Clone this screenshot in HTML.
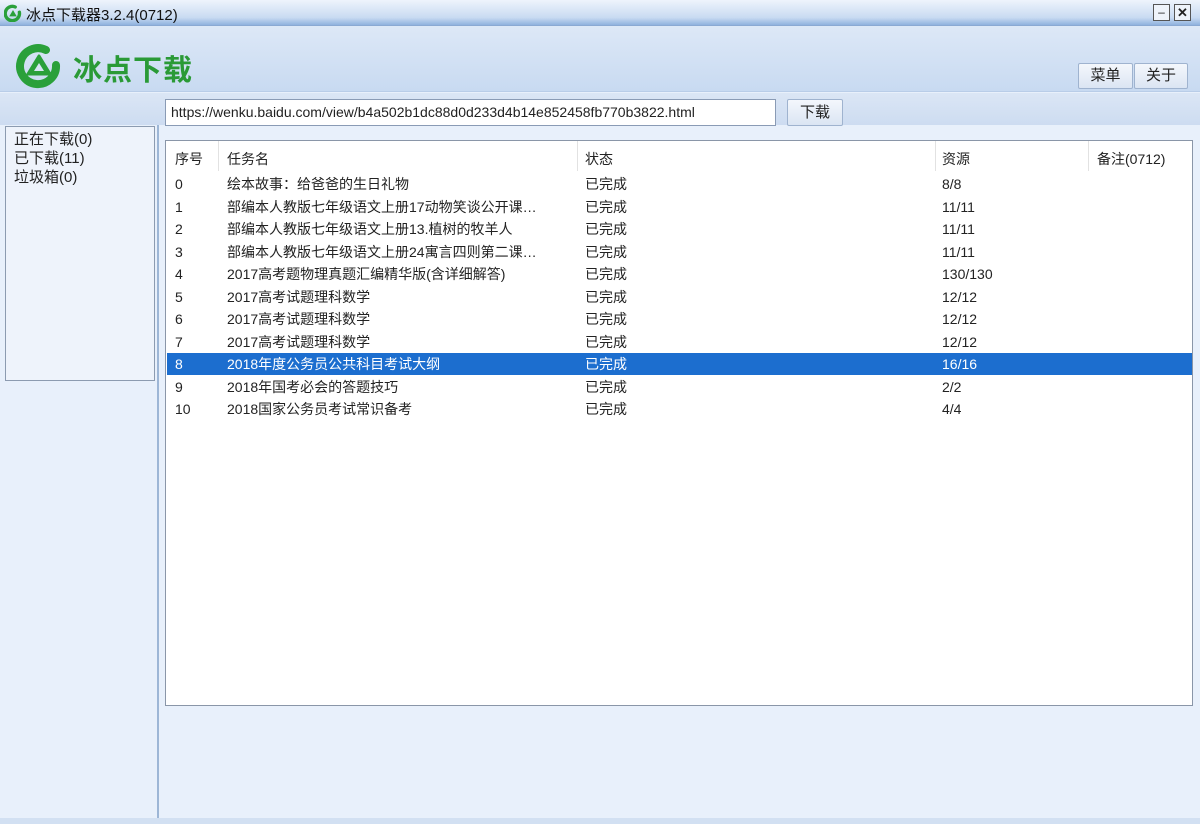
<!DOCTYPE html>
<html><head><meta charset="utf-8"><style>
*{margin:0;padding:0;box-sizing:border-box}
body{width:1200px;height:824px;overflow:hidden;background:#e8f0fb;font-family:"Liberation Sans","Noto Sans CJK SC",sans-serif;font-size:14px;color:#222;position:relative}
.a{position:absolute}
.title{left:0;top:0;width:1200px;height:26px;background:linear-gradient(#eef4fc,#c9dbf2 70%,#8fb2de);border-bottom:1px solid #8aa9d3}
.hdr{left:0;top:26px;width:1200px;height:66px;background:linear-gradient(#dde8f7,#c8daf1);border-bottom:1px solid #b9cde8}
.tb{left:0;top:93px;width:1200px;height:32px;background:linear-gradient(#dbe6f5,#cddcf1)}
.btn{background:linear-gradient(#f4f7fc,#dbe5f3);border:1px solid #9fb3cf;border-radius:2px;text-align:center;font-size:15px}
.row{left:167px;width:1025px;height:22px;line-height:22px}
.row span{position:absolute;top:0}
</style></head><body>
<div class="a title"></div>
<svg class="a" style="left:4px;top:4px" width="18" height="18" viewBox="0 0 48 48"><path d="M30 8 A19 19 0 1 0 41 22" fill="none" stroke="#2aa03a" stroke-width="9" stroke-linecap="round"/><path d="M24 16 L34 33 L14 33 Z" fill="#2aa03a"/></svg>
<div class="a" style="left:26px;top:4px;font-size:15px;color:#111">冰点下载器3.2.4(0712)</div>
<div class="a" style="left:1153px;top:4px;width:17px;height:17px;border:1px solid #555;background:#eef3fa;font-size:12px;text-align:center;line-height:14px">–</div>
<div class="a" style="left:1174px;top:4px;width:17px;height:17px;border:1px solid #555;background:#eef3fa;font-size:13px;text-align:center;line-height:15px;font-weight:bold">✕</div>
<div class="a hdr"></div>
<svg class="a" style="left:15px;top:41px" width="48" height="48" viewBox="0 0 48 48"><path d="M31 9 A18 18 0 1 0 41 24" fill="none" stroke="#2aa03a" stroke-width="8" stroke-linecap="round"/><path d="M24 15 L35 33 L13 33 Z" fill="#2aa03a" stroke="#2aa03a" stroke-width="3" stroke-linejoin="round"/><path d="M24 22 L29 30 L19 30 Z" fill="#d8e5f5"/></svg>
<div class="a" style="left:73px;top:47px;font-size:29px;color:#2a9a36;font-weight:bold;letter-spacing:1px">冰点下载</div>
<div class="a btn" style="left:1078px;top:63px;width:55px;height:26px;line-height:24px">菜单</div>
<div class="a btn" style="left:1134px;top:63px;width:54px;height:26px;line-height:24px">关于</div>
<div class="a tb"></div>
<div class="a" style="left:165px;top:99px;width:611px;height:27px;background:#fff;border:1px solid #8a9bb5;font-size:14px;line-height:25px;padding-left:5px">https://wenku.baidu.com/view/b4a502b1dc88d0d233d4b14e852458fb770b3822.html</div>
<div class="a btn" style="left:787px;top:99px;width:56px;height:27px;line-height:25px">下载</div>
<div class="a" style="left:157px;top:125px;width:2px;height:695px;background:#9db6d6"></div>
<div class="a" style="left:0;top:818px;width:1200px;height:6px;background:#d2e0f2"></div>
<div class="a" style="left:5px;top:126px;width:150px;height:255px;background:#eef3fb;border:1px solid #8c9bb0;padding:3px 0 0 8px;line-height:19px;font-size:15px">正在下载(0)<br>已下载(11)<br>垃圾箱(0)</div>
<div class="a" style="left:165px;top:140px;width:1028px;height:566px;background:#fff;border:1px solid #8a96a8"></div>
<div class="a" style="left:218px;top:141px;width:1px;height:30px;background:#e2e2e2"></div>
<div class="a" style="left:577px;top:141px;width:1px;height:30px;background:#e2e2e2"></div>
<div class="a" style="left:935px;top:141px;width:1px;height:30px;background:#e2e2e2"></div>
<div class="a" style="left:1088px;top:141px;width:1px;height:30px;background:#e2e2e2"></div>
<div class="a row" style="top:148px"><span style="left:8px">序号</span><span style="left:60px">任务名</span><span style="left:418px">状态</span><span style="left:775px">资源</span><span style="left:930px">备注(0712)</span></div>
<div class="a row" style="top:173px"><span style="left:8px">0</span><span style="left:60px">绘本故事：给爸爸的生日礼物</span><span style="left:418px">已完成</span><span style="left:775px">8/8</span></div>
<div class="a row" style="top:196px"><span style="left:8px">1</span><span style="left:60px">部编本人教版七年级语文上册17动物笑谈公开课…</span><span style="left:418px">已完成</span><span style="left:775px">11/11</span></div>
<div class="a row" style="top:218px"><span style="left:8px">2</span><span style="left:60px">部编本人教版七年级语文上册13.植树的牧羊人</span><span style="left:418px">已完成</span><span style="left:775px">11/11</span></div>
<div class="a row" style="top:241px"><span style="left:8px">3</span><span style="left:60px">部编本人教版七年级语文上册24寓言四则第二课…</span><span style="left:418px">已完成</span><span style="left:775px">11/11</span></div>
<div class="a row" style="top:263px"><span style="left:8px">4</span><span style="left:60px">2017高考题物理真题汇编精华版(含详细解答)</span><span style="left:418px">已完成</span><span style="left:775px">130/130</span></div>
<div class="a row" style="top:286px"><span style="left:8px">5</span><span style="left:60px">2017高考试题理科数学</span><span style="left:418px">已完成</span><span style="left:775px">12/12</span></div>
<div class="a row" style="top:308px"><span style="left:8px">6</span><span style="left:60px">2017高考试题理科数学</span><span style="left:418px">已完成</span><span style="left:775px">12/12</span></div>
<div class="a row" style="top:331px"><span style="left:8px">7</span><span style="left:60px">2017高考试题理科数学</span><span style="left:418px">已完成</span><span style="left:775px">12/12</span></div>
<div class="a row" style="top:353px;background:#1c6ecf;color:#fff"><span style="left:8px">8</span><span style="left:60px">2018年度公务员公共科目考试大纲</span><span style="left:418px">已完成</span><span style="left:775px">16/16</span></div>
<div class="a row" style="top:376px"><span style="left:8px">9</span><span style="left:60px">2018年国考必会的答题技巧</span><span style="left:418px">已完成</span><span style="left:775px">2/2</span></div>
<div class="a row" style="top:398px"><span style="left:8px">10</span><span style="left:60px">2018国家公务员考试常识备考</span><span style="left:418px">已完成</span><span style="left:775px">4/4</span></div>
</body></html>
